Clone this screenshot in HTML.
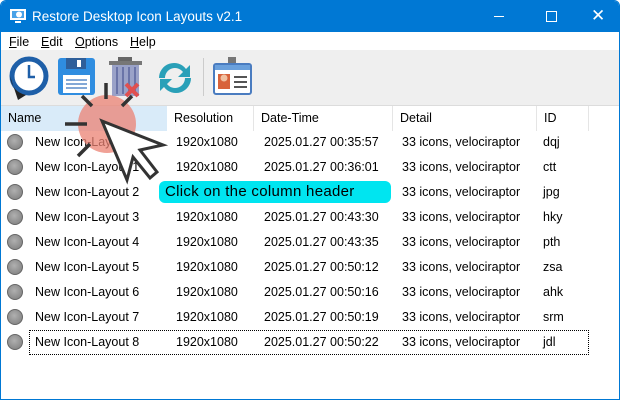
<!DOCTYPE html><html><head><style>
body{margin:0;width:620px;height:402px;overflow:hidden;background:#fff;font-family:"Liberation Sans",sans-serif;font-size:12.5px;color:#000;position:relative}
.abs{position:absolute}
#win{left:0;top:0;width:618px;height:398px;border:1px solid #0078d4;border-radius:6px 6px 0 0;overflow:hidden}
#title{left:0;top:0;width:620px;height:31px;background:#0078d4;color:#fff;font-size:13.5px}
#menu{top:31px;left:0;width:620px;height:18px;background:#fff;font-size:12.5px}
#tb{top:49px;left:0;width:620px;height:55px;background:#efefef;border-bottom:1px solid #dcdcdc}
.hd{top:105px;height:25px;line-height:25px;border-right:1px solid #e5e5e5;padding-left:7px;box-sizing:border-box}
.row{left:0;width:620px;height:25px}
.row span{position:absolute;top:5px}
.dot{position:absolute;left:7px;top:4px;width:16px;height:16px;border-radius:50%;background:radial-gradient(circle at 45% 40%,#b0b0b0,#7a7a7a);border:1px solid #666;box-sizing:border-box}
</style></head><body>
<div id="win" class="abs">
<div id="title" class="abs">
 <svg class="abs" style="left:8px;top:6px" width="18" height="18"><rect x="1" y="2" width="16" height="11" fill="#fff"/><rect x="3" y="4" width="12" height="7" fill="#4aa3e8"/><circle cx="10" cy="7.5" r="3" fill="#fff"/><rect x="6" y="14" width="6" height="2" fill="#fff"/></svg>
 <span class="abs" style="left:31px;top:8px">Restore Desktop Icon Layouts v2.1</span>
 <div class="abs" style="left:493px;top:15px;width:10px;height:1px;background:#fff"></div>
 <div class="abs" style="left:545px;top:10px;width:9px;height:9px;border:1px solid #fff"></div>
 <span class="abs" style="left:590px;top:5px;font-size:17px">✕</span>
</div>
<div id="menu" class="abs">
 <span class="abs" style="left:8px;top:3px"><u>F</u>ile</span>
 <span class="abs" style="left:40px;top:3px"><u>E</u>dit</span>
 <span class="abs" style="left:74px;top:3px"><u>O</u>ptions</span>
 <span class="abs" style="left:129px;top:3px"><u>H</u>elp</span>
</div>
<div id="tb" class="abs">
 <svg class="abs" style="left:5px;top:6px" width="44" height="44"><circle cx="23" cy="20" r="17" fill="#fff" stroke="#1e5fa8" stroke-width="5"/><path d="M23 9v12h6" stroke="#1e5fa8" stroke-width="2.5" fill="none"/><path d="M4 20 q2 16 16 19 l-8 5 z" fill="#222"/></svg>
 <svg class="abs" style="left:56px;top:7px" width="40" height="40"><rect x="1" y="1" width="37" height="37" rx="3" fill="#2f8de0"/><rect x="9" y="1" width="20" height="11" fill="#2f5f9a"/><rect x="20" y="3" width="4" height="7" fill="#fff"/><rect x="6" y="18" width="27" height="18" fill="#fff"/><path d="M9 23h21M9 27h21M9 31h21" stroke="#5a8cc8" stroke-width="1.5"/></svg>
 <svg class="abs" style="left:105px;top:6px" width="40" height="44"><rect x="12" y="1" width="14" height="4" fill="#666"/><rect x="3" y="5" width="33" height="4" fill="#777"/><rect x="6" y="9" width="27" height="31" fill="#9aa2c8"/><path d="M11 11v27M17 11v27M23 11v27M29 11v27" stroke="#6a74a8" stroke-width="2"/><path d="M20 28l12 12M32 28l-12 12" stroke="#e05050" stroke-width="4"/></svg>
 <svg class="abs" style="left:154px;top:8px" width="40" height="40"><path d="M4 20a15 15 0 0 1 27-9l4-4v12h-12l5-5a10 10 0 0 0-18 6z" fill="#2aa0b8"/><path d="M36 20a15 15 0 0 1-27 9l-4 4v-12h12l-5 5a10 10 0 0 0 18-6z" fill="#2aa0b8"/></svg>
 <div class="abs" style="left:202px;top:8px;width:1px;height:38px;background:#ccc"></div>
 <svg class="abs" style="left:211px;top:6px" width="42" height="44"><rect x="16" y="1" width="8" height="8" fill="#777"/><rect x="2" y="8" width="37" height="30" rx="2" fill="#fff" stroke="#4a7cc0" stroke-width="2"/><rect x="3" y="9" width="35" height="5" fill="#6aa0dc"/><rect x="6" y="18" width="12" height="15" fill="#d8623a"/><circle cx="12" cy="22" r="3.5" fill="#f0c0a0"/><path d="M22 21h13M22 26h13M22 31h13" stroke="#555" stroke-width="2"/></svg>
</div>
<div class="abs" style="left:0;top:105px;width:166px;height:25px;background:#d9ebf9"></div>
<div class="abs hd" style="left:0;width:166px;border:0">Name</div>
<div class="abs hd" style="left:166px;width:87px">Resolution</div>
<div class="abs hd" style="left:253px;width:139px">Date-Time</div>
<div class="abs hd" style="left:392px;width:144px">Detail</div>
<div class="abs hd" style="left:536px;width:52px">ID</div>
</div>
<div id="rows"></div>
<script>
var ids=["dqj","ctt","jpg","hky","pth","zsa","ahk","srm","jdl"],t=["00:35:57","00:36:01","00:43:21","00:43:30","00:43:35","00:50:12","00:50:16","00:50:19","00:50:22"],h="";
for(var i=0;i<9;i++){h+='<div class="abs row" style="top:'+(130+i*25)+'px"><div class="dot"></div><span style="left:35px">New Icon-Layout'+(i?' '+i:'')+'</span><span style="left:176px">1920x1080</span><span style="left:264px">2025.01.27 '+t[i]+'</span><span style="left:402px">33 icons, velociraptor</span><span style="left:543px">'+ids[i]+'</span></div>';}
document.getElementById("rows").innerHTML=h;
</script>
<div class="abs" style="left:29px;top:330px;width:558px;height:23px;border:1px dotted #000"></div>
<div class="abs" style="left:159px;top:181px;width:232px;height:22px;background:#00e5f0;border-radius:6px;font-size:15px;line-height:22px;padding-left:6px;box-sizing:border-box;letter-spacing:0.3px">Click on the column header</div>
<div class="abs" style="left:78px;top:95px;width:58px;height:58px;border-radius:50%;background:rgba(235,130,115,.75)"></div>
<svg class="abs" style="left:60px;top:80px" width="110" height="110"><path d="M46 3v16M22 16l10 10M72 16l-10 10M5 44h22M30 64l-12 12" stroke="#333" stroke-width="3.5"/><path d="M42 41l61 24-23 5 17 22-7 6-17-21-6 23z" fill="#fff" stroke="#333" stroke-width="3" stroke-linejoin="miter"/></svg>
</body></html>
